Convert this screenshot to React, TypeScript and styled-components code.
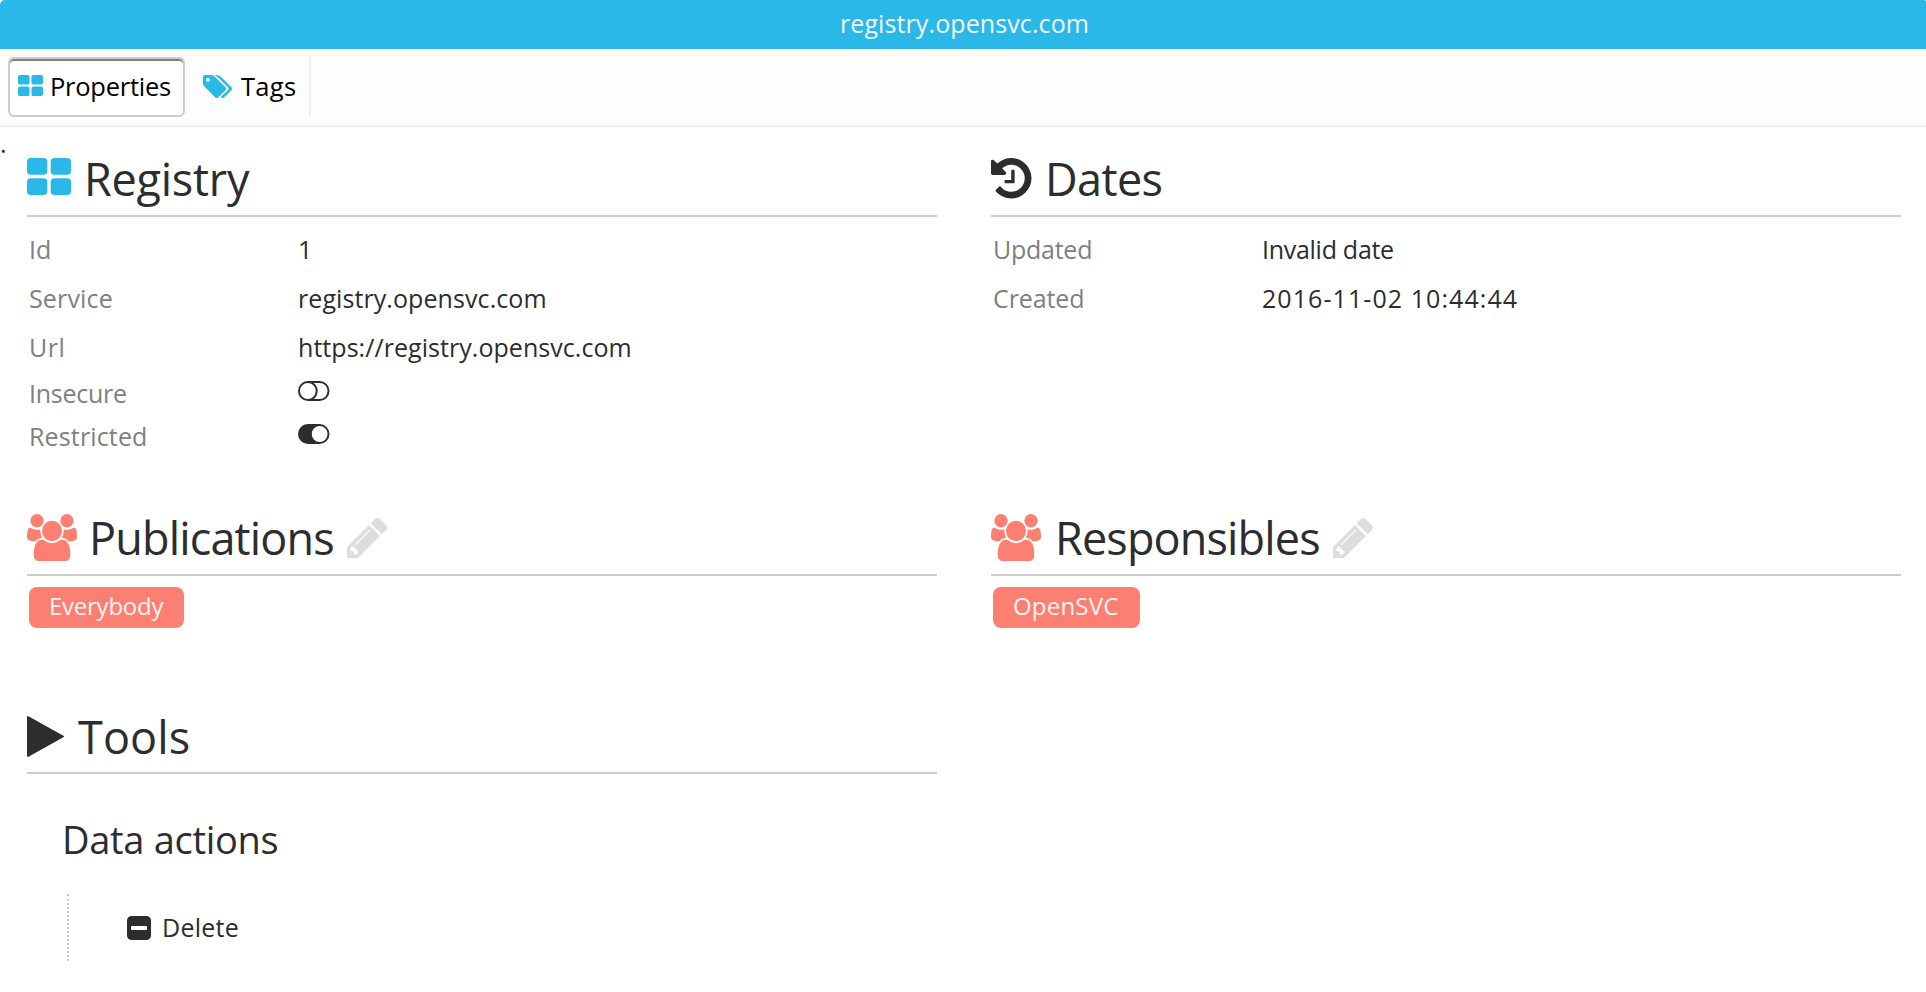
import React from 'react';
import styled, { createGlobalStyle } from 'styled-components';

const colors = {
  brand: '#29b8e8',
  salmon: '#fb8072',
  ink: '#2b2d2f',
  muted: '#808080',
  rule: '#cccccc',
};

const GlobalStyle = createGlobalStyle`
  * { box-sizing: border-box; }
  body {
    margin: 0;
    background: #fff;
    color: ${colors.ink};
    font: 25px "Open Sans", "Noto Sans", sans-serif;
    overflow: hidden;
  }
`;

const Page = styled.div`
  height: 992px;
  display: flex;
  flex-direction: column;
`;

const TitleBar = styled.header`
  height: 49px;
  flex: none;
  padding-left: 3px;
  border-radius: 5px 2px 0 0;
  background: ${colors.brand};
  color: #f5f5f5;
  text-align: center;
  line-height: 46px;
  letter-spacing: 0.1px;
`;

const TabBar = styled.nav`
  height: 78px;
  flex: none;
  display: flex;
  padding: 8px 8px 0;
  background: #fdfdfd;
  border-bottom: 2px solid #eee;
`;

const Tab = styled.div<{ $active?: boolean }>`
  display: flex;
  width: ${(p) => (p.$active ? 177 : 126)}px;
  height: ${(p) => (p.$active ? 60 : 59)}px;
  padding-left: ${(p) => (p.$active ? 8 : 18)}px;
  color: #000;
  font-size: 25.5px;
  line-height: 54px;
  ${(p) =>
    p.$active
      ? `border: 2px solid ${colors.rule}; border-radius: 6px; background: #fff; box-shadow: inset 0 2px 0 #808080; letter-spacing: -0.25px;`
      : 'border-right: 2px solid #eee; padding-top: 2px; letter-spacing: 0.3px;'}
`;

const Glyph = styled.svg<{ $w: number; $h: number; $top?: number; $gap?: number; $tone?: string }>`
  flex: none;
  display: block;
  width: ${(p) => p.$w}px;
  height: ${(p) => p.$h}px;
  margin-top: ${(p) => p.$top ?? 0}px;
  margin-right: ${(p) => p.$gap ?? 0}px;
  fill: ${(p) => p.$tone ?? 'currentColor'};
`;

const Content = styled.main`
  flex: 1;
  display: flex;
  padding-right: 25px;
`;

const Marker = styled.div`
  width: 27px;
  height: 32px;
  line-height: 32px;
`;

const Columns = styled.div`
  flex: 1;
  display: grid;
  grid-template-columns: 910px 910px;
  grid-template-rows: 359px 199px auto;
  column-gap: 54px;
  padding-top: 21px;
`;

const Section = styled.section``;

const SectionHead = styled.div<{ $height?: number }>`
  display: flex;
  height: ${(p) => p.$height ?? 69}px;
  border-bottom: 2px solid ${colors.rule};
`;

const Heading = styled.h2<{ $track: number }>`
  margin: 0;
  font-size: 45px;
  font-weight: 400;
  line-height: 62px;
  letter-spacing: ${(p) => p.$track}px;
  white-space: nowrap;
`;

const Fields = styled.dl`
  margin: 0;
  padding: 7px 2px 0;
`;

const Field = styled.div<{ $compact?: boolean }>`
  display: flex;
  align-items: center;
  height: ${(p) => (p.$compact ? 43 : 49)}px;
`;

const Label = styled.dt<{ $track?: number }>`
  width: 269px;
  color: ${colors.muted};
  letter-spacing: ${(p) => p.$track ?? 0}px;
`;

const Value = styled.dd<{ $track?: number }>`
  margin: 0;
  letter-spacing: ${(p) => p.$track ?? 0}px;
  white-space: nowrap;
`;

const ToggleSlot = styled.dd`
  margin: 0 0 4px;
`;

const Badge = styled.span<{ $track: number }>`
  display: inline-block;
  height: 41px;
  margin: 11px 2px 0;
  padding: 0 21px 0 20px;
  border-radius: 8px;
  background: ${colors.salmon};
  color: #f7f3f3;
  font-size: 24px;
  line-height: 38px;
  letter-spacing: ${(p) => p.$track}px;
`;

const PencilBox = styled.span`
  padding: 11px 0 0 13px;
`;

const ActionGroup = styled.h3`
  margin: 40px 0 0 35px;
  font-size: 38px;
  font-weight: 400;
  line-height: 50px;
  letter-spacing: -0.3px;
`;

const ActionList = styled.div`
  display: flex;
  height: 67px;
  margin: 30px 0 0 40px;
  padding-left: 58px;
  border-left: 2px dotted #ccc;
  line-height: 67px;
  letter-spacing: 0.25px;
`;

type GlyphProps = { w: number; h: number; top?: number; gap?: number; tone?: string };
const glyph = (viewBox: string, d: string) =>
  function Icon({ w, h, top, gap, tone }: GlyphProps) {
    return (
      <Glyph viewBox={viewBox} preserveAspectRatio="none" $w={w} $h={h} $top={top} $gap={gap} $tone={tone}>
        <path fillRule="evenodd" d={d} />
      </Glyph>
    );
  };

const GridIcon = glyph(
  '64 128 1664 1408',
  'M832 1024v384q0 52-38 90t-90 38h-512q-52 0-90-38t-38-90v-384q0-52 38-90t90-38h512q52 0 90 38t38 90zm0-768v384q0 52-38 90t-90 38h-512q-52 0-90-38t-38-90v-384q0-52 38-90t90-38h512q52 0 90 38t38 90zm896 768v384q0 52-38 90t-90 38h-512q-52 0-90-38t-38-90v-384q0-52 38-90t90-38h512q52 0 90 38t38 90zm0-768v384q0 52-38 90t-90 38h-512q-52 0-90-38t-38-90v-384q0-52 38-90t90-38h512q52 0 90 38t38 90z',
);
const TagsIcon = glyph(
  '128 128 1899 1515',
  'M576 448q0-53-37.500-90.500t-90.500-37.500-90.500 37.500-37.500 90.500 37.500 90.500 90.500 37.500 90.500-37.500 37.500-90.500zm1067 576q0 53-37 90l-491 492q-39 37-91 37-53 0-90-37l-715-716q-38-37-64.500-101t-26.500-117v-416q0-52 38-90t90-38h416q53 0 117 26.500t102 64.500l715 714q37 39 37 91zm384 0q0 53-37 90l-491 492q-39 37-91 37-36 0-59-14t-53-45l470-470q37-37 37-90 0-52-37-91l-715-714q-38-38-102-64.500t-117-26.500h224q53 0 117 26.500t102 64.500l715 714q37 39 37 91z',
);
const HistoryIcon = glyph(
  '128 128 1536 1536',
  'M1664 896q0 156-61 298t-164 245-245 164-298 61q-172 0-327-72.500t-264-204.500q-7-10-6.500-22.500t8.500-20.500l137-138q10-9 25-9 16 2 23 12 73 95 179 147t225 52q104 0 198.500-40.500t163.500-109.500 109.500-163.500 40.500-198.500-40.500-198.500-109.500-163.500-163.500-109.500-198.500-40.500q-98 0-188 35.500t-160 101.500l137 138q31 30 14 69-17 40-59 40h-448q-26 0-45-19t-19-45v-448q0-42 40-59 39-17 69 14l130 129q107-101 244.500-156.500t284.500-55.500q156 0 298 61t245 164 164 245 61 298zm-640-288v448q0 14-9 23t-23 9h-320q-14 0-23-9t-9-23v-64q0-14 9-23t23-9h224v-352q0-14 9-23t23-9h64q14 0 23 9t9 23z',
);
const UsersIcon = glyph(
  '0 0 1920 1792',
  'M593 896q-162 5-265 128h-134q-82 0-138-40.500t-56-118.500q0-353 124-353 6 0 43.500 21t97.500 42.500 119 21.500q67 0 133-23-5 37-5 66 0 139 81 256zm1071 637q0 120-73 189.500t-194 69.500h-874q-121 0-194-69.500t-73-189.500q0-53 3.500-103.500t14-109 26.500-108.500 43-97.500 62-81 85.500-53.500 111.500-20q10 0 43 21.500t73 48 107 48 135 21.500 135-21.500 107-48 73-48 43-21.500q61 0 111.500 20t85.500 53.500 62 81 43 97.500 26.500 108.500 14 109 3.500 103.500zm-1024-1277q0 106-75 181t-181 75-181-75-75-181 75-181 181-75 181 75 75 181zm704 384q0 159-112.500 271.500t-271.500 112.500-271.500-112.500-112.500-271.500 112.500-271.500 271.500-112.500 271.500 112.500 112.500 271.500zm576 225q0 78-56 118.500t-138 40.500h-134q-103-123-265-128 81-117 81-256 0-29-5-66 66 23 133 23 59 0 119-21.500t97.500-42.500 43.500-21q124 0 124 353zm-128-609q0 106-75 181t-181 75-181-75-75-181 75-181 181-75 181 75 75 181z',
);
const PencilIcon = glyph(
  '128 149 1515 1515',
  'M491 1536l91-91-235-235-91 91v107h128v128h107zm523-928q0-22-22-22-10 0-17 7l-542 542q-7 7-7 17 0 22 22 22 10 0 17-7l542-542q7-7 7-17zm-54-192l416 416-832 832h-416v-416zm683 96q0 53-37 90l-166 166-416-416 166-165q36-38 90-38 53 0 91 38l235 234q37 39 37 91z',
);
const PlayIcon = glyph(
  '192 114 1407 1563',
  'M1576 927l-1328 738q-23 13-39.500 3t-16.500-36v-1472q0-26 16.500-36t39.500 3l1328 738q23 13 23 31t-23 31z',
);
const MinusIcon = glyph(
  '128 128 1536 1536',
  'M1408 960v-128q0-26-19-45t-45-19h-896q-26 0-45 19t-19 45v128q0 26 19 45t45 19h896q26 0 45-19t19-45zm256-544v960q0 119-84.500 203.500t-203.500 84.500h-960q-119 0-203.500-84.500t-84.500-203.500v-960q0-119 84.500-203.500t203.500-84.500h960q119 0 203.500 84.500t84.500 203.500z',
);
const ToggleOffIcon = glyph(
  '0 0 2048 1280',
  'M640 0H1408A640 640 0 0 1 1408 1280H640A640 640 0 0 1 640 0ZM640 128A512 512 0 1 0 640 1152A512 512 0 1 0 640 128ZM1022 128A640 640 0 0 1 1022 1152H1408A512 512 0 0 0 1408 128Z',
);
const ToggleOnIcon = glyph(
  '0 0 2048 1280',
  'M640 0H1408A640 640 0 0 1 1408 1280H640A640 640 0 0 1 640 0ZM1408 128A512 512 0 1 0 1408 1152A512 512 0 1 0 1408 128Z',
);

export default function App() {
  return (
    <Page>
      <GlobalStyle />
      <TitleBar>registry.opensvc.com</TitleBar>
      <TabBar>
        <Tab $active>
          <GridIcon w={25} h={21} top={16} gap={7} tone={colors.brand} />
          Properties
        </Tab>
        <Tab>
          <TagsIcon w={29} h={23} top={16} gap={9} tone={colors.brand} />
          Tags
        </Tab>
      </TabBar>
      <Content>
        <Marker>.</Marker>
        <Columns>
          <Section>
            <SectionHead>
              <GridIcon w={44} h={37} top={10} gap={13} tone={colors.brand} />
              <Heading $track={-0.25}>Registry</Heading>
            </SectionHead>
            <Fields>
              <Field>
                <Label>Id</Label>
                <Value>1</Value>
              </Field>
              <Field>
                <Label $track={0.15}>Service</Label>
                <Value $track={0.08}>registry.opensvc.com</Value>
              </Field>
              <Field>
                <Label $track={0.5}>Url</Label>
                <Value $track={0.05}>https://registry.opensvc.com</Value>
              </Field>
              <Field $compact>
                <Label $track={-0.25}>Insecure</Label>
                <ToggleSlot>
                  <ToggleOffIcon w={31.5} h={20} />
                </ToggleSlot>
              </Field>
              <Field $compact>
                <Label $track={0.15}>Restricted</Label>
                <ToggleSlot>
                  <ToggleOnIcon w={31.5} h={20} />
                </ToggleSlot>
              </Field>
            </Fields>
          </Section>
          <Section>
            <SectionHead>
              <HistoryIcon w={40.5} h={40.5} top={10} gap={13.5} />
              <Heading $track={-0.6}>Dates</Heading>
            </SectionHead>
            <Fields>
              <Field>
                <Label $track={-0.25}>Updated</Label>
                <Value $track={-0.28}>Invalid date</Value>
              </Field>
              <Field>
                <Label $track={-0.1}>Created</Label>
                <Value $track={1.07}>2016-11-02 10:44:44</Value>
              </Field>
            </Fields>
          </Section>
          <Section>
            <SectionHead>
              <UsersIcon w={50} h={47.5} top={6.5} gap={12} tone={colors.salmon} />
              <Heading $track={-0.84}>Publications</Heading>
              <PencilBox>
                <PencilIcon w={40} h={40} tone="#dddddd" />
              </PencilBox>
            </SectionHead>
            <Badge $track={-0.25}>Everybody</Badge>
          </Section>
          <Section>
            <SectionHead>
              <UsersIcon w={50} h={47.5} top={6.5} gap={14} tone={colors.salmon} />
              <Heading $track={-0.86}>Responsibles</Heading>
              <PencilBox>
                <PencilIcon w={40} h={40} tone="#dddddd" />
              </PencilBox>
            </SectionHead>
            <Badge $track={0.2}>OpenSVC</Badge>
          </Section>
          <Section>
            <SectionHead $height={68}>
              <PlayIcon w={37} h={41} top={10} gap={14} />
              <Heading $track={0.1}>Tools</Heading>
            </SectionHead>
            <ActionGroup>Data actions</ActionGroup>
            <ActionList>
              <MinusIcon w={24} h={24} top={21.5} gap={11} />
              Delete
            </ActionList>
          </Section>
        </Columns>
      </Content>
    </Page>
  );
}
